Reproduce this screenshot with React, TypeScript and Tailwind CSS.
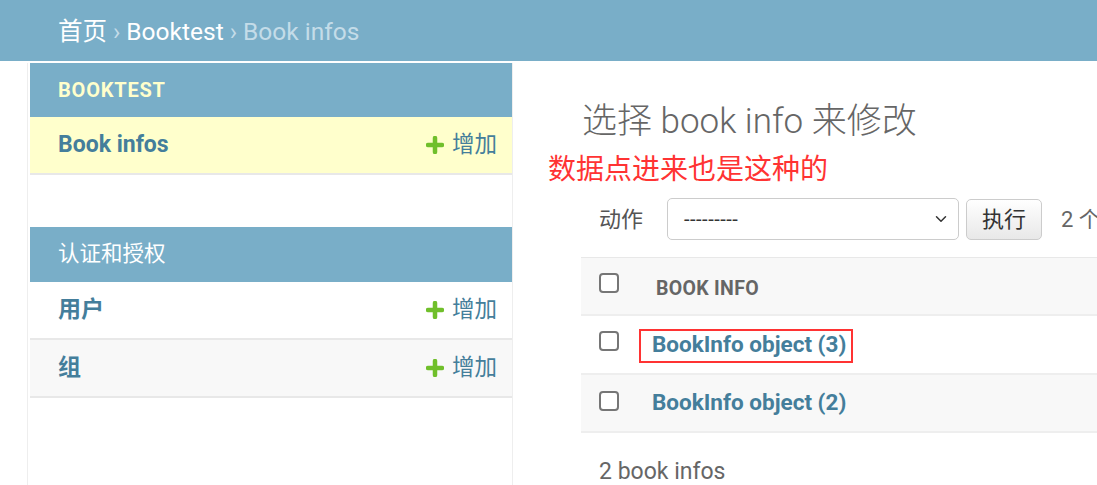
import { ChevronDown } from 'lucide-react'

function Plus() {
  return (
    <svg width="18" height="18" viewBox="0 0 18 18" className="shrink-0">
      <path d="M9 2v14M2 9h14" stroke="#70bf2b" strokeWidth="4.5" strokeLinecap="round" />
    </svg>
  )
}

function NavRow({ label, tone }: { label: string; tone: string }) {
  return (
    <div className={`flex h-[58px] items-center justify-between border-b-2 border-[#e8e8e8] pl-[28px] pr-[15px] ${tone}`}>
      <span className="text-[23px] font-bold text-[#447e9b]">{label}</span>
      <span className="flex items-center gap-[8px] text-[22.5px] text-[#447e9b]">
        <Plus />
        增加
      </span>
    </div>
  )
}

function Checkbox() {
  return <span className="block h-[20px] w-[20px] rounded-[4px] border-2 border-[#767676] bg-white" />
}

export default function App() {
  return (
    <div className="min-h-[485px] bg-white font-['Roboto','Noto_Sans_CJK_SC',sans-serif]">
      <header className="flex h-[61px] items-center bg-[#79aec8] pt-[4px] pl-[58px] text-[24.5px] text-[#c4dce8]">
        <span className="text-white">首页</span>
        <span className="mx-[6px]">›</span>
        <span className="text-white">Booktest</span>
        <span className="mx-[6px]">›</span>
        <span>Book infos</span>
      </header>

      <div className="mt-[2px] flex h-[422px] overflow-hidden">
        <aside className="ml-[27px] w-[486px] shrink-0 border-x border-[#eee] pl-[2px]">
          <div className="flex h-[54px] items-center bg-[#79aec8] pl-[28px] text-[20px] font-bold tracking-[0.8px] text-[#ffc]">
            BOOKTEST
          </div>
          <NavRow label="Book infos" tone="bg-[#ffc]" />
          <div className="h-[52px]" />
          <div className="flex h-[55px] items-center bg-[#79aec8] pl-[28px] text-[21.5px] text-white">认证和授权</div>
          <NavRow label="用户" tone="bg-white" />
          <NavRow label="组" tone="bg-[#f8f8f8]" />
        </aside>

        <main className="min-w-0 flex-1 overflow-hidden pl-[68px]">
          <h1 className="mt-[39px] ml-px text-[35px] leading-[40px] font-light whitespace-nowrap text-[#666]">
            选择 book info 来修改
          </h1>
          <p className="mt-[14px] -ml-[33px] text-[28px] leading-[28px] whitespace-nowrap text-[#f33]">
            数据点进来也是这种的
          </p>

          <div className="mt-[14px] flex items-center pl-[18px] whitespace-nowrap">
            <span className="shrink-0 text-[22px] text-[#555]">动作</span>
            <div className="ml-[24px] flex h-[42px] w-[292px] shrink-0 items-center justify-between rounded-[5px] border border-[#ccc] pr-[8px] pl-[16px] text-[20px] tracking-[0.5px] text-[#333]">
              <span>---------</span>
              <ChevronDown size={18} strokeWidth={2} className="text-[#333]" />
            </div>
            <button className="ml-[7px] h-[41px] w-[76px] shrink-0 rounded-[5px] border border-[#ccc] bg-gradient-to-b from-white to-[#e8e8e8] text-[22px] text-[#333]">
              执行
            </button>
            <span className="ml-[19px] shrink-0 text-[22px] text-[#666]">2 个中 0 个被选</span>
          </div>

          <div className="mt-[17px] w-[560px] border-t border-[#e8e8e8]">
            <div className="flex h-[58px] items-start border-b-2 border-[#eee] bg-[#f8f8f8] pl-[18px]">
              <div className="mt-[15px]"><Checkbox /></div>
              <span className="mt-[16px] ml-[37px] text-[19.5px] font-bold tracking-[0.3px] text-[#666]">BOOK INFO</span>
            </div>
            <div className="flex h-[59px] items-start border-b-2 border-[#eee] bg-white pl-[18px]">
              <div className="mt-[15px]"><Checkbox /></div>
              <a className="mt-[13px] ml-[20px] border-2 border-[#f33] pt-0 pr-[5px] pb-[4px] pl-[11px] text-[22.5px] leading-[26px] font-bold text-[#447e9b]">
                BookInfo object (3)
              </a>
            </div>
            <div className="flex h-[58px] items-start border-b-2 border-[#eee] bg-[#f8f8f8] pl-[18px]">
              <div className="mt-[16px]"><Checkbox /></div>
              <a className="mt-[12px] ml-[20px] border-2 border-transparent pt-0 pr-[5px] pb-[4px] pl-[11px] text-[22.5px] leading-[26px] font-bold text-[#447e9b]">
                BookInfo object (2)
              </a>
            </div>
          </div>

          <p className="mt-[22px] pl-[18px] text-[23px] text-[#666]">2 book infos</p>
        </main>
      </div>
    </div>
  )
}
